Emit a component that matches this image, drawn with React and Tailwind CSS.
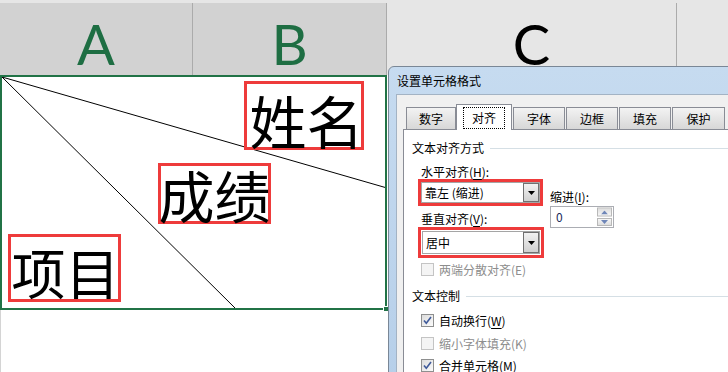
import React from "react";

const CJK = { fontFamily: '"Noto Sans CJK SC", "Noto Sans", sans-serif' };

const TABS = [
  { label: "数字", w: "w-[50px]" },
  { label: "对齐", w: "w-[56px]", active: true },
  { label: "字体", w: "w-[52px]" },
  { label: "边框", w: "w-[52px]" },
  { label: "填充", w: "w-[52px]" },
  { label: "保护", w: "w-[53px]" },
];

const Mn = ({ children }) => <span className="underline underline-offset-2">{children}</span>;

const Arrow = ({ color = "#000" }) => (
  <svg width="7" height="4" viewBox="0 0 7 4">
    <path d="M0 0h7L3.5 4z" fill={color} />
  </svg>
);

const Select = ({ value }) => (
  <div className="flex h-full w-full bg-white border border-[#a5a5a5]">
    <div className="flex-1 flex items-center pl-[3px] text-[12px] leading-none">{value}</div>
    <div className="w-[16px] flex items-center justify-center border border-[#707070] bg-gradient-to-b from-[#f2f2f2] to-[#d0d0d0]">
      <Arrow />
    </div>
  </div>
);

const Check = ({ checked, disabled, children }) => (
  <div className="flex items-center h-[13px] pl-[9px]">
    <div
      className={
        "w-[13px] h-[13px] border flex items-center justify-center " +
        (disabled ? "border-[#c4c4c4] bg-[#f4f4f4]" : "border-[#8e8f8f] bg-gradient-to-br from-[#dcdcdc] to-[#fbfbfb]")
      }
    >
      {checked && (
        <svg width="9" height="9" viewBox="0 0 9 9">
          <path d="M1 4.5l2.3 2.8L8 1" stroke="#3f5a9a" strokeWidth="1.6" fill="none" />
        </svg>
      )}
    </div>
    <span className={"ml-[5px] text-[12px] leading-none " + (disabled ? "text-[#8d8d8d]" : "text-black")}>{children}</span>
  </div>
);

const Heading = ({ children }) => (
  <div className="flex items-center h-[16px]">
    <span className="text-[12px] leading-none">{children}</span>
    <div className="flex-1 h-px bg-[#d5dfe5] ml-[6px]" />
  </div>
);

const Label = ({ className, children }) => (
  <div className={"absolute border-[3px] border-[#ee3b3b] flex items-center justify-center whitespace-nowrap leading-none text-black " + className}>
    <span>{children}</span>
  </div>
);

export default function App() {
  return (
    <div className="relative w-[728px] h-[372px] overflow-hidden bg-white" style={CJK}>
      {/* column headers */}
      <div className="h-[3px] bg-[#e6e6e6]" />
      <div className="flex h-[72px] text-[56px] leading-none" style={{ fontFamily: "Lato, sans-serif" }}>
        <div className="w-[193px] bg-[#d2d2d2] border-r border-[#ababab] flex items-center justify-center pt-[10px] text-[#1e6e43]">A</div>
        <div className="w-[194px] bg-[#d2d2d2] border-r border-[#ababab] flex items-center justify-center pt-[10px] text-[#1e6e43]">B</div>
        <div className="w-[290px] bg-[#e6e6e6] border-r border-[#ababab] flex items-center justify-center pt-[10px] text-black">C</div>
        <div className="flex-1 bg-[#e6e6e6]" />
      </div>

      {/* merged cell */}
      <div className="relative w-[387px] h-[235px] border-2 border-[#217346] bg-white">
        <svg className="absolute inset-0" width="383" height="231" viewBox="0 0 383 231">
          <line x1="0" y1="0" x2="385" y2="111" stroke="#000" strokeWidth="1" />
          <line x1="0" y1="0" x2="233" y2="231" stroke="#000" strokeWidth="1" />
        </svg>
        <Label className="left-[242px] top-[4px] w-[120px] h-[69px] pt-[7px] pl-[5px] text-[57px]">姓名</Label>
        <Label className="left-[156px] top-[86px] w-[113px] h-[61px] text-[56px]">成绩</Label>
        <Label className="left-[6px] top-[157px] w-[113px] h-[68px] pt-[8px] pl-[2px] text-[54px]">项目</Label>
        <div className="absolute -right-[4px] -bottom-[4px] w-[6px] h-[6px] bg-[#217346] border border-white" />
      </div>
      <div className="h-[62px] w-[387px] border-l border-[#d4d4d4]" />

      {/* dialog */}
      <div className="absolute left-[388px] top-[66px] w-[360px] h-[320px] rounded-tl-[6px] border border-[#7a8796] bg-gradient-to-b from-[#c6dbf0] to-[#b6cfe9]">
        <div className="h-[27px] flex items-center pl-[8px] text-[12px] leading-none text-black">设置单元格格式</div>
        <div className="ml-[7px] h-full border-l border-t border-[#a3b3c4] bg-[#f0f0f0] pl-[6px] pt-[9px]">
          <div className="flex items-end pl-[3px] h-[25px]">
            {TABS.map((t, i) =>
              t.active ? (
                <div key={i} className={t.w + " h-[26px] -mb-px relative z-10 bg-white border border-b-0 border-[#898c95] flex items-center justify-center"}>
                  <span className="text-[12px] leading-none px-[8px] py-[4px] border border-dotted border-black">{t.label}</span>
                </div>
              ) : (
                <div key={i} className={t.w + " h-[22px] ml-[1px] first:ml-0 border border-b-0 border-[#898c95] bg-gradient-to-b from-[#f3f3f3] to-[#d7d7d7] flex items-center justify-center text-[12px] leading-none"}>
                  {t.label}
                </div>
              )
            )}
          </div>
          <div className="h-[260px] bg-white border-l border-t border-[#898c95] pl-[8px]">
            <div className="mt-[10px]">
              <Heading>文本对齐方式</Heading>
            </div>
            <div className="flex mt-[9px]">
              <div className="pl-[6px]">
                <div className="h-[14px] pl-[3px] flex items-center text-[12px] leading-none">
                  水平对齐(<Mn>H</Mn>):
                </div>
                <div className="w-[125px] h-[27px] border-[3px] border-[#ee3b3b]">
                  <Select value="靠左 (缩进)" />
                </div>
                <div className="h-[14px] mt-[6px] pl-[3px] flex items-center text-[12px] leading-none">
                  垂直对齐(<Mn>V</Mn>):
                </div>
                <div className="w-[126px] h-[31px] mt-[1px] border-[3px] border-[#ee3b3b] p-[1px]">
                  <Select value="居中" />
                </div>
              </div>
              <div className="ml-[6px] pt-[25px]">
                <div className="h-[14px] flex items-center text-[12px] leading-none">
                  缩进(<Mn>I</Mn>):
                </div>
                <div className="mt-[2px] w-[64px] h-[22px] border border-[#abadb3] bg-white flex items-center">
                  <span className="flex-1 pl-[5px] text-[12px] leading-none text-[#1a2a5a]">0</span>
                  <div className="w-[15px] h-[18px] mr-[1px] flex flex-col gap-px">
                    <div className="flex-1 border border-[#b8b8b8] bg-gradient-to-b from-[#f6f6f6] to-[#dedede] flex items-center justify-center rotate-180">
                      <Arrow color="#6f86b8" />
                    </div>
                    <div className="flex-1 border border-[#b8b8b8] bg-gradient-to-b from-[#f6f6f6] to-[#dedede] flex items-center justify-center">
                      <Arrow color="#6f86b8" />
                    </div>
                  </div>
                </div>
              </div>
            </div>
            <div className="mt-[5px]">
              <Check disabled>两端分散对齐(E)</Check>
            </div>
            <div className="mt-[12px]">
              <Heading>文本控制</Heading>
            </div>
            <div className="mt-[10px]">
              <Check checked>
                自动换行(<Mn>W</Mn>)
              </Check>
            </div>
            <div className="mt-[10px]">
              <Check disabled>缩小字体填充(K)</Check>
            </div>
            <div className="mt-[9px]">
              <Check checked>
                合并单元格(<Mn>M</Mn>)
              </Check>
            </div>
          </div>
        </div>
      </div>
    </div>
  );
}
